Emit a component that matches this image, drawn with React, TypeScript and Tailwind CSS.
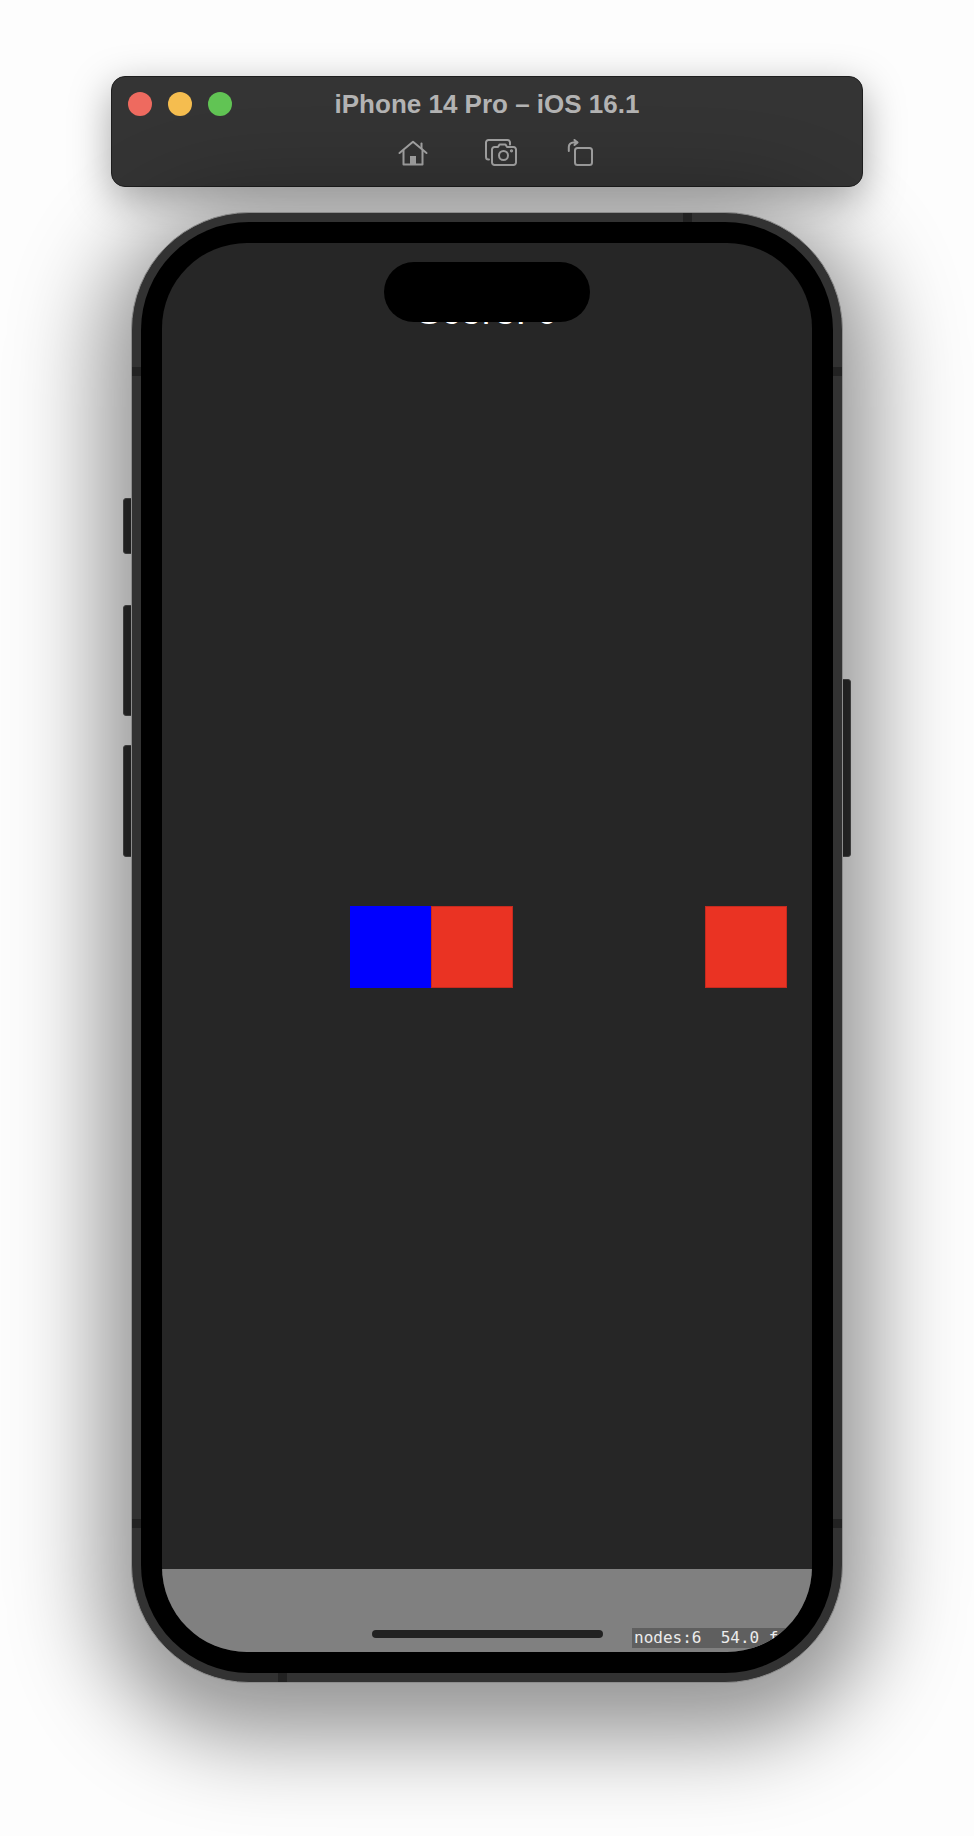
import React from 'react'

// simulator toolbar icons, drawn to match the SF symbols in the reference
function HomeIcon() {
  return (
    <svg width="30" height="26" viewBox="0 0 30 26" fill="none" stroke="#a3a3a3" strokeWidth="2" strokeLinecap="round" strokeLinejoin="round">
      <path d="M1.5 13 L15 1.8 L28.5 13" />
      <path d="M23.5 8.5 V3.5" />
      <path d="M5.5 10.5 V24.5 H24.5 V10.5" />
      <rect x="12" y="16" width="6" height="8.5" fill="#a3a3a3" stroke="none" />
    </svg>
  )
}

function CameraIcon() {
  return (
    <svg width="32" height="27" viewBox="0 0 32 27" fill="none" stroke="#a3a3a3" strokeWidth="2" strokeLinecap="round" strokeLinejoin="round">
      <path d="M4 20.5 H3.5 A2.5 2.5 0 0 1 1 18 V3.5 A2.5 2.5 0 0 1 3.5 1 H22.5 A2.5 2.5 0 0 1 25 3.5 V5.5" />
      <path d="M9.5 8 H13 L14.5 5.5 H20.5 L22 8 H28.5 A2.5 2.5 0 0 1 31 10.5 V23.5 A2.5 2.5 0 0 1 28.5 26 H9.5 A2.5 2.5 0 0 1 7 23.5 V10.5 A2.5 2.5 0 0 1 9.5 8 Z" />
      <circle cx="18.5" cy="16.5" r="4.5" />
      <circle cx="26.5" cy="11.8" r="0.6" fill="#a3a3a3" />
    </svg>
  )
}

function RotateIcon() {
  return (
    <svg width="26" height="27" viewBox="0 0 26 27" fill="none" stroke="#a3a3a3" strokeWidth="2" strokeLinecap="round" strokeLinejoin="round">
      <rect x="8" y="9" width="17" height="17" rx="2.5" />
      <path d="M1.8 12 V8 A4.5 4.5 0 0 1 6.3 3.5 H10" />
      <path d="M7.5 1 L10.5 3.5 L7.5 6" fill="#a3a3a3" />
    </svg>
  )
}

function TitleBar() {
  return (
    <div className="w-[752px] h-[111px] rounded-[14px] bg-[#343434] border border-[#1e1e1e] shadow-[0_12px_40px_rgba(0,0,0,0.35)] flex flex-col">
      <div className="relative h-[24px] mt-[15px] flex items-center">
        <div className="flex gap-[16px] pl-[16px]">
          <span className="w-[24px] h-[24px] rounded-full bg-[#ee6a5f]" />
          <span className="w-[24px] h-[24px] rounded-full bg-[#f5bd4f]" />
          <span className="w-[24px] h-[24px] rounded-full bg-[#61c454]" />
        </div>
        <p className="absolute inset-x-0 text-center text-[26px] leading-[30px] font-bold text-[#b3b3b3] font-['Liberation_Sans',sans-serif] pointer-events-none">
          iPhone 14 Pro – iOS 16.1
        </p>
      </div>
      <div className="mt-[23px] flex items-center pl-[286px]">
        <HomeIcon />
        <span className="w-[57px]" />
        <CameraIcon />
        <span className="w-[50px]" />
        <RotateIcon />
      </div>
    </div>
  )
}

const NODES = [
  { left: 188, w: 82, color: 'bg-[#0000ff]' },
  { left: 269, w: 82, color: 'bg-[#ea3323] border border-[#c62a1f]' },
  { left: 543, w: 82, color: 'bg-[#ea3323] border border-[#c62a1f]' },
]

function Screen() {
  return (
    <div className="relative w-[650px] h-[1409px] rounded-[85px] overflow-hidden bg-[#262626] flex flex-col">
      {/* score label sits behind the island */}
      <div className="flex-1 pt-[49px]">
        <p className="text-center text-[38px] leading-none text-white font-['Liberation_Sans',sans-serif]">Score: 0</p>
      </div>

      {NODES.map((n) => (
        <div
          key={n.left}
          className={`absolute top-[663px] h-[82px] ${n.color}`}
          style={{ left: n.left, width: n.w }}
        />
      ))}

      {/* debug strip */}
      <div className="relative h-[83px] bg-[#808080]">
        <div className="absolute top-[59px] left-[470px] h-[20px] bg-[#5f5f5f] px-[2px] flex items-center whitespace-pre text-[16px] leading-none text-[#ececec] font-['DejaVu_Sans_Mono',monospace]">
          nodes:6  54.0 fps
        </div>
        <div className="absolute top-[61px] left-[210px] w-[231px] h-[8px] rounded-full bg-[#222222]" />
      </div>

      <div className="absolute top-[19px] left-[222px] w-[206px] h-[60px] rounded-full bg-black" />
    </div>
  )
}

function Phone() {
  return (
    <div className="relative mt-[25px]">
      {/* side buttons */}
      <span className="absolute -left-[8px] top-[286px] w-[9px] h-[56px] rounded-l-[3px] bg-[#2f2f2f] border border-[#555]" />
      <span className="absolute -left-[8px] top-[393px] w-[9px] h-[111px] rounded-l-[3px] bg-[#2f2f2f] border border-[#555]" />
      <span className="absolute -left-[8px] top-[533px] w-[9px] h-[112px] rounded-l-[3px] bg-[#2f2f2f] border border-[#555]" />
      <span className="absolute -right-[8px] top-[467px] w-[9px] h-[178px] rounded-r-[3px] bg-[#2f2f2f] border border-[#555]" />

      <div className="relative w-[712px] h-[1471px] rounded-[118px] bg-[#323232] border border-[#8c8c8c] p-[9px] shadow-[0_24px_90px_30px_rgba(0,0,0,0.42)]">
        {/* antenna bands */}
        <span className="absolute top-0 left-[551px] w-[9px] h-[10px] bg-[#222]" />
        <span className="absolute bottom-0 left-[146px] w-[9px] h-[10px] bg-[#222]" />
        <span className="absolute left-0 top-[154px] w-[10px] h-[9px] bg-[#222]" />
        <span className="absolute right-0 top-[154px] w-[10px] h-[9px] bg-[#222]" />
        <span className="absolute left-0 top-[1306px] w-[10px] h-[9px] bg-[#222]" />
        <span className="absolute right-0 top-[1306px] w-[10px] h-[9px] bg-[#222]" />
        <div className="relative rounded-[108px] bg-black p-[21px]">
          <Screen />
        </div>
      </div>
    </div>
  )
}

export default function App() {
  return (
    <div className="w-[974px] h-[1836px] overflow-hidden bg-[#fdfdfd] flex flex-col items-center pt-[76px]">
      <TitleBar />
      <Phone />
    </div>
  )
}
